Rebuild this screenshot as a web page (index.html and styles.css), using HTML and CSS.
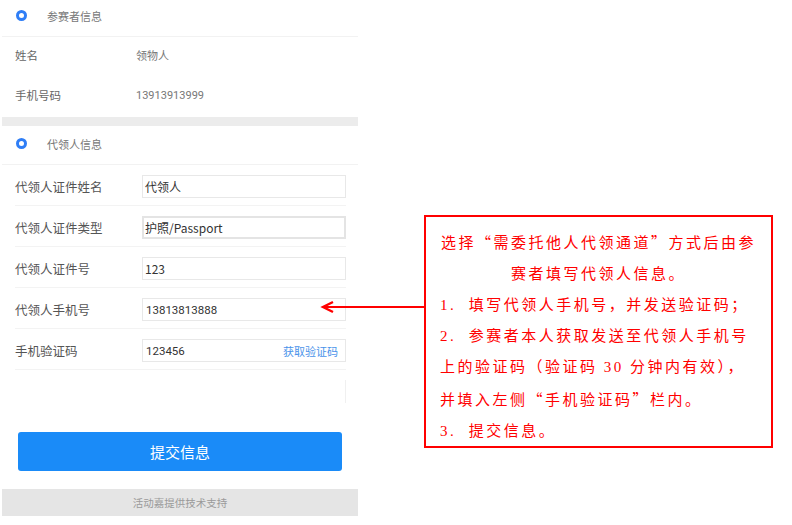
FILE: index.html
```html
<!DOCTYPE html>
<html lang="zh-CN">
<head>
    <meta charset="UTF-8">
    <meta name="viewport" content="width=device-width, initial-scale=1.0">
    <title>代领人信息</title>
    <link rel="stylesheet" href="styles.css">
</head>
<body>
    <div class="page">
        <div class="panel">
            <div class="sec-head first">
                <span class="ring"></span>
                <span class="sec-title">参赛者信息</span>
            </div>
            <div class="info-row">
                <span class="info-label">姓名</span>
                <span class="info-value">领物人</span>
            </div>
            <div class="info-row">
                <span class="info-label">手机号码</span>
                <span class="info-value">13913913999</span>
            </div>
            <div class="band"></div>

            <div class="sec-head">
                <span class="ring"></span>
                <span class="sec-title">代领人信息</span>
            </div>
            <div class="form-row">
                <label class="form-label">代领人证件姓名</label>
                <div class="field">代领人</div>
            </div>
            <div class="form-row">
                <label class="form-label">代领人证件类型</label>
                <div class="field select">护照/Passport</div>
            </div>
            <div class="form-row">
                <label class="form-label">代领人证件号</label>
                <div class="field">123</div>
            </div>
            <div class="form-row">
                <label class="form-label">代领人手机号</label>
                <div class="field num">13813813888</div>
            </div>
            <div class="form-row">
                <label class="form-label">手机验证码</label>
                <div class="field num">
                    <span>123456</span>
                    <a class="code-link">获取验证码</a>
                </div>
            </div>
            <div class="form-row last">
                <div class="field blank"></div>
            </div>

            <button class="submit">提交信息</button>
            <div class="footer">活动嘉提供技术支持</div>
        </div>

        <div class="note-area">
            <div class="note">
                <p class="note-title">选择<span class="q">“</span>需委托他人代领通道<span class="q">”</span>方式后由参<br>赛者填写代领人信息。</p>
                <p class="note-step">1.&nbsp; 填写代领人手机号，并发送验证码；</p>
                <p class="note-step">2.&nbsp; 参赛者本人获取发送至代领人手机号<br>上的验证码（验证码 30 分钟内有效），<br>并填入左侧<span class="q">“</span>手机验证码<span class="q">”</span>栏内。</p>
                <p class="note-step">3.&nbsp; 提交信息。</p>
            </div>
        </div>

        <!-- arrow from the note to the phone field -->
        <svg class="arrow" width="106" height="16" viewBox="0 0 106 16">
            <line x1="4" y1="8" x2="106" y2="8" stroke="#f00" stroke-width="2.2"/>
            <polyline points="13,3 3,8 13,13" fill="none" stroke="#f00" stroke-width="2.4"/>
        </svg>
    </div>
</body>
</html>
```

FILE: styles.css
```css
body {
    margin: 0;
    padding: 0;
    background-color: #fff;
    font-family: "Noto Sans CJK SC", "Noto Sans", sans-serif;
}
.page {
    position: relative;
    display: flex;
    align-items: flex-start;
    width: 792px;
    height: 525px;
    overflow: hidden;
}
.panel {
    width: 356px;
    margin-left: 2px;
    flex-shrink: 0;
}

/* section headers */
.sec-head {
    display: flex;
    align-items: center;
    box-sizing: border-box;
    height: 39px;
    padding-bottom: 3px;
    border-bottom: 1px solid #f2f2f2;
}
.sec-head.first {
    height: 37px;
    padding-bottom: 5px;
}
.ring {
    box-sizing: border-box;
    width: 11px;
    height: 11px;
    border: 3px solid #2f7ef6;
    border-radius: 50%;
    margin-left: 14px;
}
.sec-title {
    margin-left: 20px;
    font-size: 11px;
    line-height: 18px;
    color: #777;
}

/* read-only info */
.info-row {
    display: flex;
    align-items: center;
    box-sizing: border-box;
    height: 40px;
    padding: 0 0 4px 13px;
    font-size: 11px;
    color: #666;
}
.info-label {
    width: 121px;
    font-size: 11.5px;
}
.info-value {
    font-family: "Roboto", "Noto Sans CJK SC", sans-serif;
    color: #777;
}
.band {
    height: 9px;
    background-color: #ececec;
}

/* form */
.form-row {
    display: flex;
    align-items: center;
    width: 331px;
    margin-left: 13px;
    padding: 10px 0 7px;
    border-bottom: 1px solid #f3f3f3;
}
.form-row.last {
    border-bottom: none;
    justify-content: flex-end;
}
.form-label {
    width: 127px;
    flex-shrink: 0;
    font-size: 12.5px;
    color: #555;
}
.field {
    flex: 1;
    display: flex;
    align-items: center;
    justify-content: space-between;
    box-sizing: border-box;
    height: 23px;
    padding: 0 7px 0 2px;
    border: 1px solid #e8e8e8;
    font-size: 12px;
    color: #333;
}
.field.select {
    border: 2px solid #e4e4e4;
    padding-left: 1px;
}
.field.num {
    padding-left: 3px;
    font-family: "Roboto", "Noto Sans CJK SC", sans-serif;
    font-size: 11.5px;
}
.field.blank {
    flex: none;
    width: 1px;
    padding: 0;
    border: none;
    border-right: 1px solid #f0f0f0;
}
.code-link {
    font-family: "Noto Sans CJK SC", sans-serif;
    font-size: 11px;
    color: #4a93ea;
}

.submit {
    display: block;
    width: 324px;
    height: 39px;
    margin: 22px 0 0 16px;
    border: none;
    border-radius: 3px;
    background-color: #1a8bf8;
    color: #fff;
    font-family: "Noto Sans CJK SC", sans-serif;
    font-size: 15px;
}
.footer {
    height: 27px;
    margin-top: 18px;
    line-height: 27px;
    background-color: #e5e5e5;
    text-align: center;
    font-size: 10.5px;
    color: #9a9a9a;
}

/* annotation */
.note-area {
    padding: 215px 0 0 66px;
}
.note {
    box-sizing: border-box;
    width: 349px;
    height: 233px;
    padding: 9px 0 0 14px;
    border: 2px solid #f00;
    color: #f00;
    font-family: "Liberation Serif", "Noto Sans CJK SC", serif;
    font-size: 15px;
    line-height: 31px;
    letter-spacing: 2.5px;
    white-space: nowrap;
}
.note p {
    margin: 0;
}
.note-title {
    text-align: center;
    margin-left: -14px !important;
}
.q {
    font-family: "Noto Sans CJK SC", sans-serif;
}
.arrow {
    position: absolute;
    left: 320px;
    top: 299px;
}
```
